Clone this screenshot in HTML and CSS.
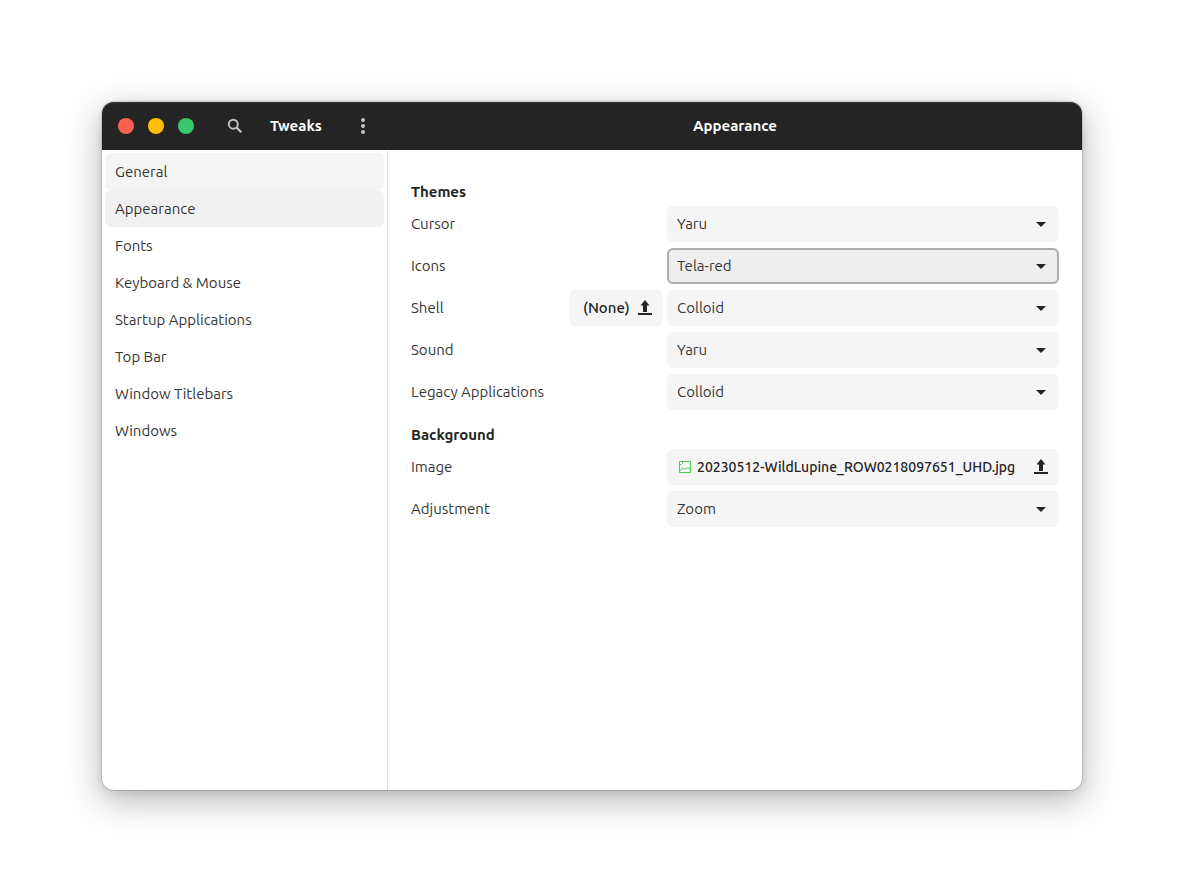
FILE: index.html
```
<!DOCTYPE html>
<html lang="en">
<head>
<meta charset="utf-8">
<title>Tweaks</title>
<link rel="stylesheet" href="styles.css">
</head>
<body>
<main class="window">
  <header class="titlebar">
    <div class="titlebar-side">
      <div class="window-controls">
        <button class="control close" aria-label="Close"></button>
        <button class="control minimize" aria-label="Minimize"></button>
        <button class="control maximize" aria-label="Maximize"></button>
      </div>
      <button class="icon-button" aria-label="Search">
        <svg width="16" height="16" viewBox="0 0 16 16"><circle cx="6.3" cy="6.2" r="4.5" fill="none" stroke="currentColor" stroke-width="1.9"/><path d="M9.5 9.4 14.3 14.2" stroke="currentColor" stroke-width="2.2"/></svg>
      </button>
      <h1 class="title app-title">Tweaks</h1>
      <button class="icon-button" aria-label="Menu">
        <svg width="16" height="16" viewBox="0 0 16 16" fill="currentColor"><circle cx="8" cy="2" r="2"/><circle cx="8" cy="8" r="2"/><circle cx="8" cy="14" r="2"/></svg>
      </button>
    </div>
    <h2 class="title page-title">Appearance</h2>
  </header>
  <div class="body">
    <nav class="sidebar">
      <a class="nav-item hovered" href="#general">General</a>
      <a class="nav-item selected" href="#appearance" aria-current="page">Appearance</a>
      <a class="nav-item" href="#fonts">Fonts</a>
      <a class="nav-item" href="#keyboard">Keyboard &amp; Mouse</a>
      <a class="nav-item" href="#startup">Startup Applications</a>
      <a class="nav-item" href="#topbar">Top Bar</a>
      <a class="nav-item" href="#titlebars">Window Titlebars</a>
      <a class="nav-item" href="#windows">Windows</a>
    </nav>
    <div class="content">
      <section class="group">
        <h3 class="group-title">Themes</h3>
        <div class="rows">
          <div class="row">
            <label class="label" for="cursor">Cursor</label>
            <div class="dropdown"><select class="select" id="cursor"><option>Yaru</option></select><svg class="arrow" width="10" height="5" viewBox="0 0 10 5"><path d="M0 0h10L5 5z"/></svg></div>
          </div>
          <div class="row">
            <label class="label" for="icons">Icons</label>
            <div class="dropdown"><select class="select active" id="icons"><option>Tela-red</option></select><svg class="arrow" width="10" height="5" viewBox="0 0 10 5"><path d="M0 0h10L5 5z"/></svg></div>
          </div>
          <div class="row">
            <label class="label" for="shell">Shell</label>
            <button class="file-button compact"><span>(None)</span><svg width="14" height="16" viewBox="0 0 14 16"><path d="M7 0l4.500 5.500H9V12H5V5.500H2.500zM0 13h14v2H0z"/></svg></button>
            <div class="dropdown"><select class="select" id="shell"><option>Colloid</option></select><svg class="arrow" width="10" height="5" viewBox="0 0 10 5"><path d="M0 0h10L5 5z"/></svg></div>
          </div>
          <div class="row">
            <label class="label" for="sound">Sound</label>
            <div class="dropdown"><select class="select" id="sound"><option>Yaru</option></select><svg class="arrow" width="10" height="5" viewBox="0 0 10 5"><path d="M0 0h10L5 5z"/></svg></div>
          </div>
          <div class="row">
            <label class="label" for="legacy">Legacy Applications</label>
            <div class="dropdown"><select class="select" id="legacy"><option>Colloid</option></select><svg class="arrow" width="10" height="5" viewBox="0 0 10 5"><path d="M0 0h10L5 5z"/></svg></div>
          </div>
        </div>
      </section>
      <section class="group">
        <h3 class="group-title">Background</h3>
        <div class="rows">
          <div class="row">
            <label class="label" for="image">Image</label>
            <button class="file-button wide" id="image">
              <svg class="picture" width="12" height="12" viewBox="0 0 12 12" fill="none" stroke="currentColor"><path d="M.5.5h11v11H.5z"/><path d="M1 10l2.200-3.200L5 8.500l1.200-1.300 1 1L9.200 6l2.300 3.500M1 3.500h1.500l1-1V1" stroke-width=".9"/></svg>
              <span class="file-name">20230512-WildLupine_ROW0218097651_UHD.jpg</span>
              <svg width="14" height="16" viewBox="0 0 14 16"><path d="M7 0l4.500 5.500H9V12H5V5.500H2.500zM0 13h14v2H0z"/></svg>
            </button>
          </div>
          <div class="row">
            <label class="label" for="adjustment">Adjustment</label>
            <div class="dropdown"><select class="select" id="adjustment"><option>Zoom</option></select><svg class="arrow" width="10" height="5" viewBox="0 0 10 5"><path d="M0 0h10L5 5z"/></svg></div>
          </div>
        </div>
      </section>
    </div>
  </div>
</main>
</body>
</html>
```
FILE: styles.css
```
* { box-sizing: border-box; }

body {
  margin: 0;
  min-height: 100vh;
  padding: 102px;
  display: flex;
  background: #fff;
  color: #363636;
  font: 15px/20px Ubuntu, "Noto Sans", sans-serif;
}

button, select {
  margin: 0;
  border: 0;
  font: inherit;
  color: inherit;
}

.window {
  flex: 1;
  display: flex;
  flex-direction: column;
  border-radius: 12px;
  background: #fff;
  box-shadow: 0 0 0 1px rgba(0, 0, 0, .12), 0 10px 36px rgba(0, 0, 0, .3), 0 2px 8px rgba(0, 0, 0, .1);
}

.titlebar {
  display: flex;
  align-items: center;
  height: 48px;
  border-radius: 12px 12px 0 0;
  background: #242424;
  box-shadow: inset 0 1px #3a3a3a;
  color: #fff;
}

.titlebar-side {
  flex: none;
  display: flex;
  align-items: center;
  width: 286px;
  padding-left: 16px;
}

.window-controls {
  display: flex;
  gap: 14px;
  margin-right: 29px;
}

.control {
  width: 16px;
  height: 16px;
  padding: 0;
  border-radius: 50%;
}

.close { background: #fd5f51; }
.minimize { background: #febe04; }
.maximize { background: #38c76a; }

.icon-button {
  display: flex;
  padding: 4px;
  background: none;
  color: #c4c4c4;
}

.title {
  margin: 0;
  font-size: 15px;
  font-weight: 700;
  text-align: center;
}

.app-title {
  width: 98px;
  margin-right: 6px;
}

.page-title { flex: 1; }

.body {
  flex: 1;
  display: flex;
}

.sidebar {
  flex: none;
  width: 286px;
  padding: 3px;
  border-right: 1px solid #dedede;
}

.nav-item {
  display: flex;
  align-items: center;
  height: 37px;
  padding: 0 10px;
  border-radius: 6px;
  color: inherit;
  text-decoration: none;
}

.hovered { background: #f4f4f4; }
.selected { background: #f1f1f1; }

.content {
  flex: 1;
  display: flex;
  flex-direction: column;
  gap: 15px;
  padding: 32px 23px;
}

.group-title {
  margin: 0 0 4px;
  color: #242424;
  font-size: 15px;
  font-weight: 700;
}

.rows {
  display: grid;
  gap: 6px;
}

.row {
  display: flex;
  align-items: center;
  gap: 4px;
}

.label { flex: 1; }

.dropdown {
  position: relative;
  width: 392px;
}

.select {
  display: block;
  width: 100%;
  height: 36px;
  padding: 0 32px 0 10px;
  border-radius: 6px;
  background: #f5f5f5;
  appearance: none;
}

.select.active {
  background: #eee;
  box-shadow: inset 0 0 0 2px #adadad;
}

.arrow {
  position: absolute;
  top: 16px;
  right: 13px;
  fill: #242424;
  pointer-events: none;
}

.file-button {
  display: flex;
  align-items: center;
  height: 36px;
  border-radius: 6px;
  background: #f5f5f5;
  color: #242424;
  fill: #242424;
  font-weight: 500;
}

.compact {
  justify-content: space-between;
  width: 94px;
  padding: 0 11px 0 14px;
}

.wide {
  gap: 6px;
  width: 392px;
  padding: 0 11px 0 12px;
}

.picture {
  flex: none;
  color: #4ccb4f;
}

.file-name {
  flex: 1;
  font-size: 14px;
  text-align: left;
}
```
